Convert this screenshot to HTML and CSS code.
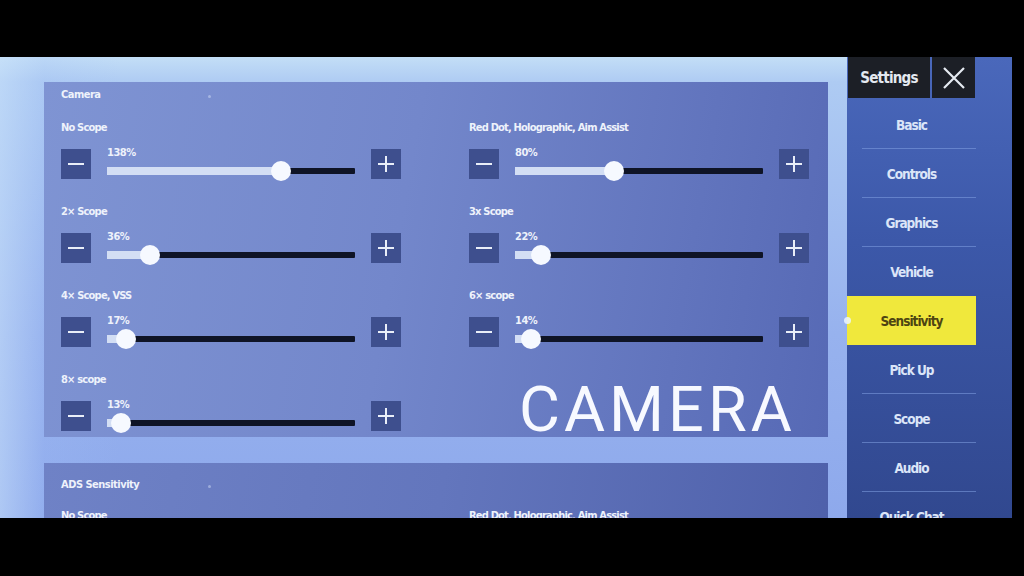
FILE: index.html
```html
<!DOCTYPE html>
<html>
<head>
<meta charset="utf-8">
<link rel="stylesheet" href="styles.css">
</head>
<body>
<div class="frame">
  <div class="screen">
    <div class="main">
      <section class="panel panel-camera">
        <div class="panel-title">Camera<span class="title-dot"></span></div>
        <div class="grid">
          <div class="setting">
            <div class="label">No Scope</div>
            <div class="control">
              <div class="btn minus"></div>
              <div class="slider"><span class="pct">138%</span><div class="track"><div class="fill" style="width:70%"></div><div class="knob" style="left:70%"></div></div></div>
              <div class="btn plus"></div>
            </div>
          </div>
          <div class="setting">
            <div class="label">Red Dot, Holographic, Aim Assist</div>
            <div class="control">
              <div class="btn minus"></div>
              <div class="slider"><span class="pct">80%</span><div class="track"><div class="fill" style="width:40%"></div><div class="knob" style="left:40%"></div></div></div>
              <div class="btn plus"></div>
            </div>
          </div>
          <div class="setting">
            <div class="label">2× Scope</div>
            <div class="control">
              <div class="btn minus"></div>
              <div class="slider"><span class="pct">36%</span><div class="track"><div class="fill" style="width:17.5%"></div><div class="knob" style="left:17.5%"></div></div></div>
              <div class="btn plus"></div>
            </div>
          </div>
          <div class="setting">
            <div class="label">3x Scope</div>
            <div class="control">
              <div class="btn minus"></div>
              <div class="slider"><span class="pct">22%</span><div class="track"><div class="fill" style="width:10.5%"></div><div class="knob" style="left:10.5%"></div></div></div>
              <div class="btn plus"></div>
            </div>
          </div>
          <div class="setting">
            <div class="label">4× Scope, VSS</div>
            <div class="control">
              <div class="btn minus"></div>
              <div class="slider"><span class="pct">17%</span><div class="track"><div class="fill" style="width:7.7%"></div><div class="knob" style="left:7.7%"></div></div></div>
              <div class="btn plus"></div>
            </div>
          </div>
          <div class="setting">
            <div class="label">6× scope</div>
            <div class="control">
              <div class="btn minus"></div>
              <div class="slider"><span class="pct">14%</span><div class="track"><div class="fill" style="width:6.4%"></div><div class="knob" style="left:6.4%"></div></div></div>
              <div class="btn plus"></div>
            </div>
          </div>
          <div class="setting">
            <div class="label">8× scope</div>
            <div class="control">
              <div class="btn minus"></div>
              <div class="slider"><span class="pct">13%</span><div class="track"><div class="fill" style="width:5.6%"></div><div class="knob" style="left:5.6%"></div></div></div>
              <div class="btn plus"></div>
            </div>
          </div>
        </div>
        <div class="caption">CAMERA</div>
      </section>
      <section class="panel panel-ads">
        <div class="panel-title">ADS Sensitivity<span class="title-dot"></span></div>
        <div class="grid">
          <div class="setting"><div class="label">No Scope</div></div>
          <div class="setting"><div class="label">Red Dot, Holographic, Aim Assist</div></div>
        </div>
      </section>
    </div>
    <aside class="sidebar">
      <div class="side-head">
        <div class="head-title">Settings</div>
        <div class="head-close">
          <svg width="26" height="26" viewBox="0 0 26 26"><path d="M3 3 L23 23 M23 3 L3 23" stroke="#e6ebf2" stroke-width="2.2" fill="none"/></svg>
        </div>
      </div>
      <nav class="menu">
        <div class="item">Basic</div>
        <div class="item">Controls</div>
        <div class="item">Graphics</div>
        <div class="item no-line">Vehicle</div>
        <div class="item active no-line">Sensitivity<span class="marker"></span></div>
        <div class="item">Pick Up</div>
        <div class="item">Scope</div>
        <div class="item">Audio</div>
        <div class="item">Quick Chat</div>
      </nav>
    </aside>
  </div>
</div>
</body>
</html>
```

FILE: styles.css
```css
* { box-sizing: border-box; }
html, body { margin: 0; padding: 0; background: #000; }
body {
  font-family: "DejaVu Sans Condensed", "Liberation Sans Narrow", "DejaVu Sans", sans-serif;
  font-stretch: condensed;
}
.frame {
  width: 1024px;
  height: 576px;
  background: #000;
  padding-top: 57px;
  overflow: hidden;
}
.screen {
  width: 1012px;
  height: 461px;
  display: flex;
  overflow: hidden;
  background:
    linear-gradient(90deg, rgba(200,225,250,0.55) 0px, rgba(160,190,245,0.2) 44px, rgba(0,0,0,0) 120px),
    linear-gradient(180deg, #c3def6 0px, #aecbf3 25px, #97b2ee 60%, #8ea9ec 100%);
}
.main {
  flex: 1;
  padding: 25px 19px 0 44px;
  display: flex;
  flex-direction: column;
  gap: 26px;
  min-width: 0;
}
.panel {
  position: relative;
  background: linear-gradient(100deg, #7f94d3 0%, #7387cb 45%, #6174bd 80%, #5669b5 100%);
  padding: 5px 19px 6px 17px;
  color: #eef2fb;
  flex-shrink: 0;
}
.panel-camera { height: 355px; }
.panel-ads {
  height: 120px;
  padding-top: 14px;
  background: linear-gradient(100deg, #6f82c6 0%, #6376bd 50%, #4e60aa 100%);
}
.panel-title {
  position: relative;
  font-size: 11px;
  font-weight: bold;
  line-height: 16px;
  height: 16px;
  margin-bottom: 17px;
  letter-spacing: -0.5px;
}
.title-dot {
  position: absolute;
  left: 147px;
  top: 8px;
  width: 3px;
  height: 3px;
  border-radius: 50%;
  background: rgba(220,230,250,0.45);
}
.panel-ads .panel-title { margin-bottom: 15px; }
.grid {
  display: grid;
  grid-template-columns: 340px 340px;
  column-gap: 68px;
  row-gap: 25px;
}
.label {
  font-size: 11px;
  font-weight: bold;
  line-height: 16px;
  height: 16px;
  margin-bottom: 13px;
  letter-spacing: -0.8px;
  white-space: nowrap;
}
.control {
  display: flex;
  align-items: stretch;
  gap: 16px;
  height: 30px;
}
.btn {
  width: 30px;
  height: 30px;
  flex: 0 0 30px;
  background: #3e4f8e;
  position: relative;
}
.btn::before, .btn.plus::after {
  content: "";
  position: absolute;
  background: #e9eef8;
  left: 7px;
  top: 14px;
  width: 16px;
  height: 2px;
}
.btn.plus::after {
  left: 14px;
  top: 7px;
  width: 2px;
  height: 16px;
}
.slider {
  flex: 1;
  position: relative;
}
.pct {
  position: absolute;
  left: 0;
  top: -2px;
  font-size: 11px;
  font-weight: bold;
  line-height: 12px;
  letter-spacing: -0.5px;
  color: #eef2fb;
}
.track {
  position: absolute;
  left: 0;
  right: 0;
  top: 19px;
  height: 6px;
  background: #0f1426;
  border-radius: 1px;
}
.fill {
  position: absolute;
  left: 0;
  top: -1px;
  height: 8px;
  background: #d3def4;
}
.knob {
  position: absolute;
  top: 3px;
  width: 20px;
  height: 20px;
  margin: -10px 0 0 -10px;
  border-radius: 50%;
  background: #f6f9ff;
}
.caption {
  position: absolute;
  left: 475px;
  top: 293px;
  font-family: Roboto, "Liberation Sans", sans-serif;
  font-stretch: normal;
  font-size: 63px;
  font-weight: 400;
  line-height: 70px;
  letter-spacing: 4px;
  color: #f7f9ff;
}
.sidebar {
  width: 165px;
  flex: 0 0 165px;
  background: linear-gradient(180deg, #4a68bb 0%, #3c58a9 40%, #31488f 100%);
  position: relative;
}
.side-head {
  display: flex;
  gap: 2px;
  height: 41px;
  padding-left: 1px;
}
.head-title {
  width: 82px;
  background: #1c1f26;
  color: #e4e9f0;
  font-size: 15px;
  font-weight: bold;
  display: flex;
  align-items: center;
  justify-content: center;
  letter-spacing: -0.8px;
}
.head-close {
  width: 43px;
  background: #1c1f26;
  display: flex;
  align-items: center;
  justify-content: center;
}
.menu {
  width: 129px;
  padding-top: 2px;
}
.item {
  position: relative;
  height: 49px;
  display: flex;
  align-items: center;
  justify-content: center;
  font-size: 13.5px;
  font-weight: bold;
  color: #dbe5f8;
  letter-spacing: -1px;
}
.item::after {
  content: "";
  position: absolute;
  left: 15px;
  right: 0;
  bottom: 0;
  height: 1px;
  background: rgba(130,160,225,0.55);
}
.item.no-line::after { display: none; }
.item.active {
  background: #f0e83c;
  color: #4e4512;
}
.marker {
  position: absolute;
  left: -3px;
  top: 21px;
  width: 7px;
  height: 7px;
  border-radius: 50%;
  background: rgba(235,245,255,0.85);
}
```
